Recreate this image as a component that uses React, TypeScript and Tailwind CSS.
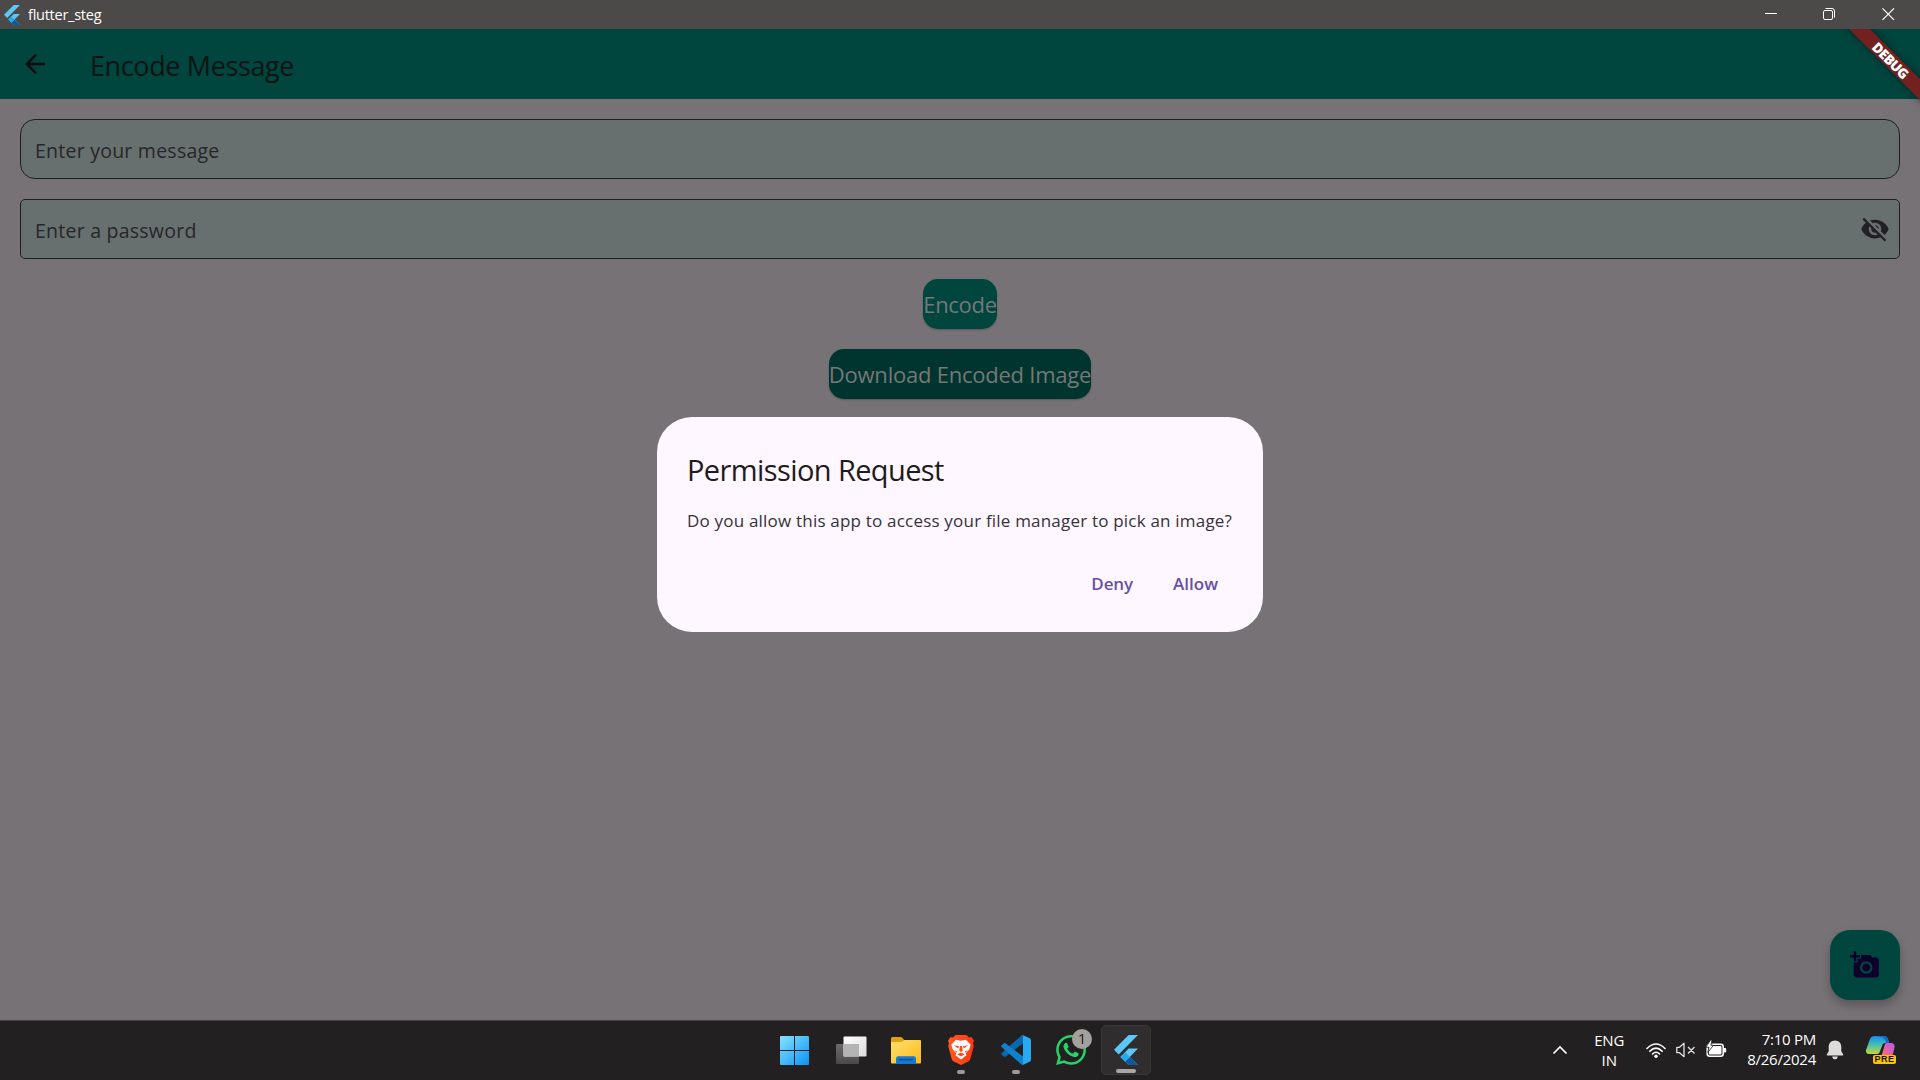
import type { ReactNode } from "react";

const FlutterLogo = ({ className }: { className: string }) => (
  <svg viewBox="0 0 24 30" className={className}>
    <path d="M14.6 0H24L4.7 19.5 0 14.8z" fill="#5cc8f8" />
    <path d="M14.6 13.6H24l-8.2 8.3 8.2 8.1h-9.4l-8.2-8.1z" fill="#5cc8f8" />
    <path d="M11 26.5l4.8-4.6L24 30h-9.4z" fill="#0b5aa0" />
    <path d="M6.4 21.9l4.7-4.7 4.7 4.7-4.7 4.7z" fill="#27a9ee" />
  </svg>
);

function TitleBar() {
  return (
    <header className="flex h-[29px] items-center bg-[#4c4a48] text-white">
      <FlutterLogo className="ml-1 h-5 w-4" />
      <span className="mt-px ml-2 text-[14.5px] leading-none tracking-[-0.25px]">flutter_steg</span>
      <div className="ml-auto flex items-center">
        <svg className="h-[29px] w-[58px]" viewBox="0 0 58 29" fill="none" stroke="white">
          <path d="M23 13.5h12" />
        </svg>
        <svg className="h-[29px] w-[59px]" viewBox="0 0 59 29" fill="none" stroke="white">
          <rect x="23.5" y="10.5" width="9" height="9" rx="1.5" />
          <path d="M25.5 8.5h6.5q2.5 0 2.5 2.5v6.5" />
        </svg>
        <svg className="h-[29px] w-[61px]" viewBox="0 0 61 29" fill="none" stroke="white" strokeWidth="1.2">
          <path d="M23.5 8.3L35 19.8M35 8.3L23.5 19.8" />
        </svg>
      </div>
    </header>
  );
}

function DebugBanner() {
  return (
    <div className="pointer-events-none absolute top-0 right-0 h-[90px] w-[90px] overflow-hidden">
      <div className="absolute top-[22.5px] left-[5px] flex h-[15px] w-[110px] rotate-45 items-center justify-center bg-[#732120] pl-0.5 text-[13.75px] leading-none font-extrabold tracking-[-0.6px] text-white shadow-[0_0_7px_rgba(0,0,0,0.5)]">
        DEBUG
      </div>
    </div>
  );
}

function AppBar() {
  return (
    <div className="flex h-[70px] items-center bg-[#00453e]">
      <svg className="ml-5 h-[30px] w-[30px]" viewBox="0 0 24 24" fill="#0d0c0f">
        <path d="M20 11H7.83l5.59-5.59L12 4l-8 8 8 8 1.41-1.41L7.83 13H20v-2z" />
      </svg>
      <h1 className="mt-0.5 ml-10 text-[27px] leading-none tracking-[-0.38px] text-[#0f1413]">
        Encode Message
      </h1>
    </div>
  );
}

function Field({ label, rounded, children }: { label: string; rounded: string; children?: ReactNode }) {
  return (
    <div className={`flex h-[60px] items-center border border-[#1d1f21] bg-[#68706f] pr-[9px] pl-[14px] ${rounded}`}>
      <span className="mt-1 text-[19.5px] leading-none tracking-[0.24px] text-[#262629]">{label}</span>
      {children}
    </div>
  );
}

function EyeOff() {
  return (
    <svg className="ml-auto h-[30px] w-[30px]" viewBox="0 0 24 24" fill="#222024">
      <path d="M12 7c2.76 0 5 2.24 5 5 0 .65-.13 1.26-.36 1.83l2.92 2.92c1.51-1.26 2.7-2.89 3.43-4.75-1.73-4.39-6-7.5-11-7.5-1.4 0-2.74.25-3.98.7l2.16 2.16C10.74 7.13 11.35 7 12 7zM2 4.27l2.28 2.28.46.46C3.08 8.3 1.78 10.02 1 12c1.73 4.39 6 7.5 11 7.5 1.55 0 3.03-.3 4.38-.84l.42.42L19.73 22 21 20.73 3.27 3 2 4.27zM7.53 9.8l1.55 1.55c-.05.21-.08.43-.08.65 0 1.66 1.34 3 3 3 .22 0 .44-.03.65-.08l1.55 1.55c-.67.33-1.41.53-2.2.53-2.76 0-5-2.24-5-5 0-.79.2-1.53.53-2.2zm4.31-.78l3.15 3.15.02-.16c0-1.66-1.34-3-3-3l-.17.01z" />
    </svg>
  );
}

function PermissionDialog() {
  return (
    <div className="flex h-[215px] w-[606px] flex-col rounded-[35px] bg-[#fef7ff] pr-[30px] pl-[30px]">
      <h2 className="mt-[33px] text-[29px] leading-10 tracking-[-0.6px] text-[#1d1b20]">
        Permission Request
      </h2>
      <p className="mt-[18px] text-[17px] leading-[25px] tracking-[0.2px] whitespace-nowrap text-[#35323a]">
        Do you allow this app to access your file manager to pick an image?
      </p>
      <div className="mt-[25px] flex h-[50px] items-center justify-end gap-[10px] text-[17px] leading-none font-semibold text-[#6750a4]">
        <button className="px-[15px] tracking-[-0.1px]">Deny</button>
        <button className="px-[15px]">Allow</button>
      </div>
    </div>
  );
}

function Slot({ children, bar }: { children: ReactNode; bar?: string }) {
  return (
    <div className="relative flex h-[55px] w-[55px] items-center justify-center">
      {children}
      {bar && <div className={`absolute bottom-1 h-1 rounded-full ${bar}`} />}
    </div>
  );
}

function Taskbar() {
  return (
    <footer className="flex h-[60px] items-center border-t border-[#454344] bg-[#222021] pb-px text-white">
      <div className="ml-[768px] flex items-center">
        <Slot>
          <svg className="mr-0.5 h-[29px] w-[29px]" viewBox="0 0 29 29">
            <defs>
              <linearGradient id="win" x1="0" y1="0" x2="29" y2="29" gradientUnits="userSpaceOnUse">
                <stop stopColor="#86e3ff" />
                <stop offset="1" stopColor="#0a93f5" />
              </linearGradient>
            </defs>
            <path d="M0 1q0-1 1-1h13v14H0zM15 0h13q1 0 1 1v13H15zM0 15h14v14H1q-1 0-1-1zM15 15h14v13q0 1-1 1H15z" fill="url(#win)" />
          </svg>
        </Slot>
        <Slot>
          <svg className="ml-px h-[29px] w-[31px]" viewBox="0 0 31 29">
            <defs>
              <linearGradient id="tv" x1="0" y1="0" x2="1" y2="1">
                <stop stopColor="#ffffff" />
                <stop offset="1" stopColor="#dcdcdc" />
              </linearGradient>
              <linearGradient id="tv2" x1="0" y1="0" x2="0" y2="1">
                <stop stopColor="#6c6c6c" />
                <stop offset="1" stopColor="#4a4a4a" />
              </linearGradient>
            </defs>
            <rect x="0" y="8" width="23" height="20" rx="1" fill="url(#tv2)" />
            <rect x="7.5" y="0.5" width="23" height="20" rx="1" fill="url(#tv)" />
            <path d="M7.5 8H23v12.5H7.5z" fill="#b4b4b4" />
          </svg>
        </Slot>
        <Slot>
          <svg className="mt-px ml-px h-[27px] w-[30px]" viewBox="0 0 30 27">
            <defs>
              <linearGradient id="fold" x1="0" y1="0" x2="1" y2="1">
                <stop stopColor="#ffdf72" />
                <stop offset="1" stopColor="#fbbc14" />
              </linearGradient>
            </defs>
            <path d="M0 1.5Q0 0 1.5 0h8q1 0 2 1l2 2.5V8H0z" fill="#e3a008" />
            <path d="M0 5h10.5l3-2H29q1 0 1 1v21.5q0 1-1 1H1q-1 0-1-1z" fill="url(#fold)" />
            <path d="M5 27v-5.5q0-2.3 2.3-2.3h15.4q2.3 0 2.3 2.3V27z" fill="#1479cf" />
            <path d="M8.5 22.6h13" stroke="#0b4c8c" strokeWidth="1.3" strokeLinecap="round" />
          </svg>
        </Slot>
        <Slot bar="w-2 bg-[#9b9999]">
          <svg className="h-[30px] w-[26px]" viewBox="0 0 26 30">
            <defs>
              <linearGradient id="brv" x1="0" x2="1">
                <stop stopColor="#ff5a1f" />
                <stop offset="1" stopColor="#ff3410" />
              </linearGradient>
            </defs>
            <path d="M7.5 0h11l2.6 2.6 2.3-.5 2.6 3.5-1 3 .8 2.4-3.5 13q-.4 1.4-1.6 2.2L13 30l-7.700-3.8q-1.2-.8-1.6-2.2L.2 11 1 8.6 0 5.6l2.6-3.5 2.3.5z" fill="url(#brv)" />
            <path d="M8 4.8l5 .9 5-.9 4.7 5-1.5 4.7-3.4 3.8.6 2.2-1.6 1.1L13 24.6l-3.8-3-1.6-1.1.6-2.2-3.4-3.8L3.3 9.8z" fill="#fff" />
            <path d="M6 10.3l5 1-.8 2.2zM20 10.3l-5 1 .8 2.2zM12 11h2l.8 4.5L13 17l-1.8-1.5zM9.3 19.2L13 17.6l3.7 1.6L13 21.4zM6.3 15l3 1.5-.8 1.3zM19.7 15l-3 1.5.8 1.3z" fill="#fb4a18" />
          </svg>
        </Slot>
        <Slot bar="w-2 bg-[#9b9999]">
          <svg className="h-[30px] w-[30px]" viewBox="0 0 30 30">
            <path d="M22 .3v8.1L4.5 21.7q-.8.6-1.5 0L.6 19.7q-.8-.8 0-1.6L20.5.5q.8-.6 1.5-.2z" fill="#0a66ad" />
            <path d="M22 29.7v-8.1L4.5 8.3q-.8-.6-1.5 0L.6 10.3q-.8.8 0 1.6l19.9 17.6q.8.6 1.5.2z" fill="#0f82cf" />
            <path d="M21.7 0l7 3.2q1.3.6 1.3 2v19.6q0 1.4-1.3 2l-7 3.2q-.7.2-1.2-.3 1.5.9 1.5-1V1.3q0-1.9-1.5-1 .5-.5 1.2-.3z" fill="#2aa8f2" />
          </svg>
        </Slot>
        <Slot>
          <svg className="h-[30px] w-[30px]" viewBox="0 0 24 24" fill="#25d366">
            <path d="M17.472 14.382c-.297-.149-1.758-.867-2.030-.967-.273-.099-.471-.148-.67.15-.197.297-.767.966-.94 1.164-.173.199-.347.223-.644.075-.297-.15-1.255-.463-2.390-1.475-.883-.788-1.480-1.761-1.653-2.059-.173-.297-.018-.458.130-.606.134-.133.298-.347.446-.52.149-.174.198-.298.298-.497.099-.198.050-.371-.025-.52-.075-.149-.669-1.612-.916-2.207-.242-.579-.487-.5-.669-.51-.173-.008-.371-.010-.570-.010-.198 0-.520.074-.792.372-.272.297-1.040 1.016-1.040 2.479 0 1.462 1.065 2.875 1.213 3.074.149.198 2.096 3.200 5.077 4.487.709.306 1.262.489 1.694.625.712.227 1.360.195 1.871.118.571-.085 1.758-.719 2.006-1.413.248-.694.248-1.289.173-1.413-.074-.124-.272-.198-.570-.347m-5.421 7.403h-.004a9.870 9.870 0 01-5.031-1.378l-.361-.214-3.741.982.998-3.648-.235-.374a9.860 9.860 0 01-1.510-5.260c.001-5.450 4.436-9.884 9.888-9.884 2.640 0 5.122 1.030 6.988 2.898a9.825 9.825 0 012.893 6.994c-.003 5.450-4.437 9.884-9.885 9.884m8.413-18.297A11.815 11.815 0 0012.050 0C5.495 0 .160 5.335.157 11.892c0 2.096.547 4.142 1.588 5.945L.057 24l6.305-1.654a11.882 11.882 0 005.683 1.448h.005c6.554 0 11.890-5.335 11.893-11.893a11.821 11.821 0 00-3.480-8.413z" />
          </svg>
          <div className="absolute top-[6px] right-[6px] flex h-5 w-5 items-center justify-center rounded-full bg-[#a3a19d] text-[15px] leading-none text-[#1c1c1c]">
            1
          </div>
        </Slot>
        <div className="relative ml-[3px] flex h-[50px] w-[50px] items-center justify-center rounded-[5px] border border-[#393738] bg-[#2f2d2e]">
          <FlutterLogo className="h-[30px] w-6" />
          <div className="absolute bottom-px h-1 w-5 rounded-full bg-[#a9a6a3]" />
        </div>
      </div>
      <div className="mr-[23px] ml-auto flex items-center">
        <svg className="h-[10px] w-[16px]" viewBox="0 0 16 10" fill="none" stroke="white" strokeWidth="1.7">
          <path d="M1.5 8.5L8 2l6.5 6.5" />
        </svg>
        <div className="ml-[25px] flex w-8 flex-col items-center text-[15px] leading-5 tracking-[-0.15px]">
          <span>ENG</span>
          <span>IN</span>
        </div>
        <svg className="ml-[21px] h-[17px] w-[20px]" viewBox="0 0 20 17" fill="none" stroke="white" strokeWidth="1.6" strokeLinecap="round">
          <path d="M1 6.5Q10-2.5 19 6.5M3.8 9.3Q10 3 16.2 9.3M6.5 12Q10 8.5 13.5 12" />
          <circle cx="10" cy="14.2" r="1.7" fill="white" stroke="none" />
        </svg>
        <svg className="ml-[10px] h-[16px] w-[20px]" viewBox="0 0 20 16" fill="none" stroke="#e4e4e4" strokeWidth="1.3" strokeLinejoin="round">
          <path d="M.8 5.3h2.7L8 1.3v13.4l-4.5-4H.8zM12 5l6.5 6.5M18.5 5L12 11.5" />
        </svg>
        <svg className="mb-0.5 ml-[10px] h-[18px] w-[21px]" viewBox="0 0 21 18">
          <rect x="1.2" y="4.2" width="16" height="12" rx="2.5" fill="none" stroke="white" strokeWidth="1.5" />
          <rect x="2.9" y="5.9" width="12.6" height="8.6" rx="1" fill="white" />
          <path d="M18 8h1.200q1 0 1 1v2.500q0 1-1 1H18z" fill="white" />
          <path d="M4.5 0L0 7.3h3L1.8 12.5 7.5 5.2H4.8L6 0z" fill="white" stroke="#222021" strokeWidth=".8" />
        </svg>
        <div className="mb-[2px] ml-[20px] flex flex-col items-end text-[15px] leading-5 tracking-[-0.25px]">
          <span>7:10 PM</span>
          <span>8/26/2024</span>
        </div>
        <svg className="ml-[10px] h-[20px] w-[18px]" viewBox="0 0 18 20" fill="#dedddb">
          <path d="M9 .5c3.8 0 6.3 2.8 6.3 6.3v4.4l1.9 3.2q.4 1.1-.8 1.1H1.6q-1.2 0-.8-1.1l1.9-3.2V6.8C2.7 3.3 5.2.5 9 .5zM6 16.5h6q-.8 2.8-3 2.8t-3-2.8z" />
        </svg>
        <div className="relative ml-[22px] h-[30px] w-[31px]">
          <svg className="h-[30px] w-[31px]" viewBox="0 0 31 30">
            <defs>
              <linearGradient id="cpA" x1="0" y1="0" x2="0" y2="1">
                <stop stopColor="#1b8df0" />
                <stop offset=".45" stopColor="#3dbdb5" />
                <stop offset="1" stopColor="#c8d63a" />
              </linearGradient>
              <linearGradient id="cpB" x1="1" y1="0" x2="0" y2="1">
                <stop stopColor="#b45cf0" />
                <stop offset=".6" stopColor="#ee5f9d" />
                <stop offset="1" stopColor="#fb8a5a" />
              </linearGradient>
            </defs>
            <path d="M9 1h9.5q2.5 0 3.4 2.7L23 8h-2.5q-3 0-4 3l-2 6.5Q13.5 19 12 19H3q-3.5 0-3-4L4 4q1.2-3 5-3z" fill="url(#cpA)" />
            <path d="M9 1h9.5q2.5 0 3.4 2.7L23 8h-3q-1-5-4.5-6z" fill="#1766d2" />
            <path d="M17 8.5h3l-4 10.5h-4.5q1.8-.5 2.4-2.5z" fill="#222021" />
            <path d="M20.5 8H25q4.3 0 3.5 4.5L27 19q-.8 3-4 3h-9q1.5-1 2-2.5l2.6-9.5q.5-1.5 1.9-2z" fill="url(#cpB)" />
          </svg>
          <div className="absolute top-[20px] left-[7px] flex h-[9px] w-[23px] items-center justify-center rounded-[2px] bg-[#ffc20a] font-['Liberation_Sans',sans-serif] text-[9px] leading-none font-bold tracking-[0.5px] text-[#1c1808]">
            PRE
          </div>
        </div>
      </div>
    </footer>
  );
}

export default function App() {
  return (
    <div className="flex h-[1080px] w-[1920px] flex-col overflow-hidden font-['Open_Sans','Noto_Sans',sans-serif]">
      <TitleBar />
      <main className="relative flex flex-1 flex-col bg-[#777276]">
        <AppBar />
        <div className="flex flex-1 flex-col gap-5 p-5">
          <Field label="Enter your message" rounded="rounded-[15px]" />
          <Field label="Enter a password" rounded="rounded-[5px]">
            <EyeOff />
          </Field>
          <button className="flex h-[50px] w-[74px] items-center justify-center self-center rounded-[15px] bg-[#00453e] text-[22px] leading-none tracking-[-0.3px] whitespace-nowrap text-[#777777] shadow-[0_1px_2px_rgba(0,0,0,0.25)]">
            Encode
          </button>
          <button className="flex h-[50px] w-[262px] items-center justify-center self-center rounded-[15px] bg-[#00352f] text-[22px] leading-none tracking-[-0.23px] whitespace-nowrap text-[#777777] shadow-[0_1px_2px_rgba(0,0,0,0.25)]">
            Download Encoded Image
          </button>
          <button className="mt-auto flex h-[70px] w-[70px] items-center justify-center self-end rounded-[20px] bg-[#00453e] shadow-[0_5px_10px_rgba(0,0,0,0.25)]">
            <svg className="h-[30px] w-[30px]" viewBox="0 0 24 24" fill="#0f002b">
              <path d="M3 4V1h2v3h3v2H5v3H3V6H0V4h3zm3 6V7h3V4h7l1.83 2H21c1.1 0 2 .9 2 2v12c0 1.1-.9 2-2 2H5c-1.1 0-2-.9-2-2V10h3zm7 9c2.76 0 5-2.24 5-5s-2.24-5-5-5-5 2.24-5 5 2.24 5 5 5zm-3.2-5c0 1.77 1.43 3.2 3.2 3.2s3.2-1.43 3.2-3.2-1.43-3.2-3.2-3.2-3.2 1.43-3.2 3.2z" />
            </svg>
          </button>
        </div>
        <div className="absolute inset-0 flex items-center justify-center">
          <PermissionDialog />
        </div>
        <DebugBanner />
      </main>
      <Taskbar />
    </div>
  );
}
